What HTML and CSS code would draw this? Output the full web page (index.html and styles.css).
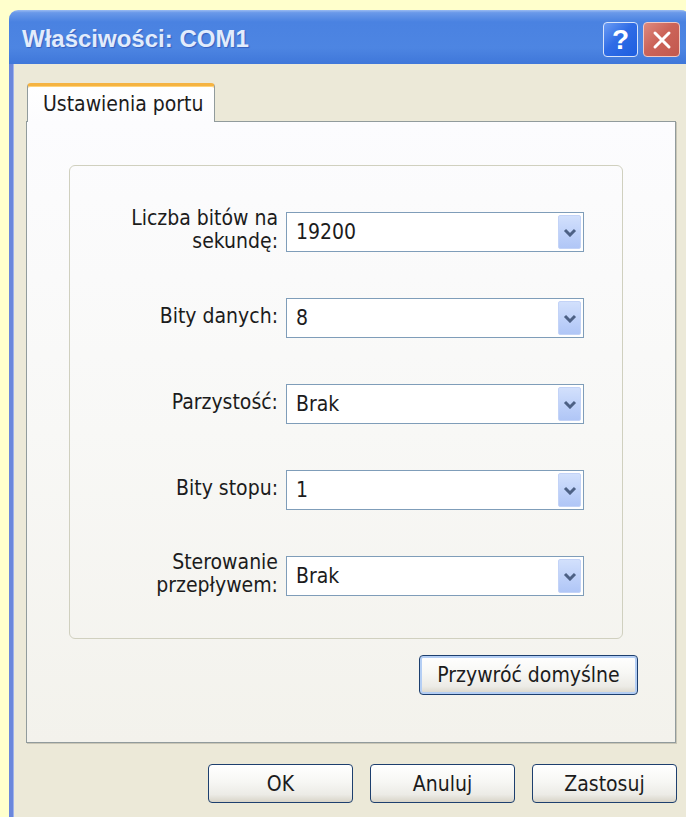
FILE: index.html
```html
<!DOCTYPE html>
<html lang="pl">
<head>
<meta charset="utf-8">
<title>Właściwości: COM1</title>
<link rel="stylesheet" href="styles.css">
</head>
<body>
<div class="window">
  <div class="titlebar">
    <span class="title">Właściwości: COM1</span>
    <div class="caption-buttons">
      <span class="cap cap-help">?</span>
      <span class="cap cap-close">
        <svg width="20" height="20" viewBox="0 0 20 20"><path d="M3 3 L17 17 M17 3 L3 17" stroke="#fff" stroke-width="3" stroke-linecap="round"/></svg>
      </span>
    </div>
  </div>
  <div class="client">
    <div class="tabs">
      <div class="tab tab-active">Ustawienia portu</div>
    </div>
    <div class="panel">
      <div class="group">
        <div class="row">
          <div class="lbl">Liczba bitów na<br>sekundę:</div>
          <div class="combo"><span class="val">19200</span><span class="drop"><svg width="14" height="9" viewBox="0 0 14 9"><path d="M2 2 L7 7 L12 2" fill="none" stroke="#4d6185" stroke-width="3"/></svg></span></div>
        </div>
        <div class="row">
          <div class="lbl">Bity danych:</div>
          <div class="combo"><span class="val">8</span><span class="drop"><svg width="14" height="9" viewBox="0 0 14 9"><path d="M2 2 L7 7 L12 2" fill="none" stroke="#4d6185" stroke-width="3"/></svg></span></div>
        </div>
        <div class="row">
          <div class="lbl">Parzystość:</div>
          <div class="combo"><span class="val">Brak</span><span class="drop"><svg width="14" height="9" viewBox="0 0 14 9"><path d="M2 2 L7 7 L12 2" fill="none" stroke="#4d6185" stroke-width="3"/></svg></span></div>
        </div>
        <div class="row">
          <div class="lbl">Bity stopu:</div>
          <div class="combo"><span class="val">1</span><span class="drop"><svg width="14" height="9" viewBox="0 0 14 9"><path d="M2 2 L7 7 L12 2" fill="none" stroke="#4d6185" stroke-width="3"/></svg></span></div>
        </div>
        <div class="row">
          <div class="lbl">Sterowanie<br>przepływem:</div>
          <div class="combo"><span class="val">Brak</span><span class="drop"><svg width="14" height="9" viewBox="0 0 14 9"><path d="M2 2 L7 7 L12 2" fill="none" stroke="#4d6185" stroke-width="3"/></svg></span></div>
        </div>
      </div>
      <div class="panel-actions">
        <button class="btn btn-focus btn-wide">Przywróć domyślne</button>
      </div>
    </div>
    <div class="dialog-actions">
      <button class="btn">OK</button>
      <button class="btn">Anuluj</button>
      <button class="btn">Zastosuj</button>
    </div>
  </div>
</div>
</body>
</html>
```
FILE: styles.css
```css
html, body {
  margin: 0;
  height: 817px;
  overflow: hidden;
}

body {
  background: #ffffcc;
  padding: 10px 0 0 9px;
  box-sizing: border-box;
  font-family: "DejaVu Sans Condensed", "DejaVu Sans", sans-serif;
  font-size: 21px;
  color: #1c1c1c;
}

.window {
  width: 681px;
}

/* caption bar */
.titlebar {
  height: 54px;
  box-sizing: border-box;
  border-radius: 9px 9px 0 0;
  background: linear-gradient(180deg, #9bbcf2 0, #6a99e9 5%, #4a82e1 22%, #4d85e2 70%, #3f77da 100%);
  display: flex;
  align-items: center;
  justify-content: space-between;
  padding: 0 10px 0 13px;
}

.title {
  font-family: "Liberation Sans", Arial, sans-serif;
  font-weight: bold;
  font-size: 24px;
  color: #e2ecfc;
  text-shadow: 1px 1px 1px rgba(20, 40, 140, 0.4);
  margin-top: 4px;
}

.caption-buttons {
  display: flex;
  gap: 5px;
  margin-top: 5px;
}

.cap {
  width: 35px;
  height: 35px;
  box-sizing: border-box;
  border: 1px solid #d8e4fb;
  border-radius: 4px;
  display: flex;
  align-items: center;
  justify-content: center;
}

.cap-help {
  background: linear-gradient(135deg, #6b9cf4 0, #2f6ce6 45%, #1e5ee0 100%);
  color: #fff;
  font-family: "Liberation Sans", Arial, sans-serif;
  font-weight: bold;
  font-size: 28px;
  line-height: 1;
}

.cap-close {
  width: 37px;
  background: linear-gradient(135deg, #dd8a7f 0, #cc6459 45%, #c2584e 100%);
  border-color: #f1c9c3;
}

/* window body */
.client {
  background: #ece9d8;
  border-left: 4px solid #6b87dc;
  border-right: 4px solid #6b87dc;
  padding: 19px 0 0 13px;
  box-shadow: inset 1px 0 0 #9fb2ea;
}

.tabs {
  display: flex;
  padding-left: 1px;
}

.tab {
  height: 39px;
  box-sizing: border-box;
  padding: 6px 0 0 15px;
  font-size: 21px;
}

.tab-active {
  width: 188px;
  background: linear-gradient(180deg, #ffffff, #fcfcfe);
  border: 1px solid #919b9c;
  border-bottom: none;
  border-top: 3px solid #f5b341;
  border-radius: 4px 4px 0 0;
  margin-bottom: -1px;
  position: relative;
  z-index: 1;
  box-shadow: inset 0 1px 0 #ffd37a;
}

.panel {
  width: 650px;
  height: 622px;
  box-sizing: border-box;
  border: 1px solid #919b9c;
  background: linear-gradient(180deg, #fcfcfe 0, #f8f8f6 50%, #f3f2ec 100%);
  box-shadow: 1px 1px 0 #c9c6b6;
  display: flex;
  flex-direction: column;
}

.group {
  width: 554px;
  height: 474px;
  box-sizing: border-box;
  margin: 43px 0 0 42px;
  border: 1px solid #d0d0bf;
  border-radius: 6px;
  padding-top: 46px;
  display: flex;
  flex-direction: column;
  gap: 46px;
}

.row {
  display: flex;
  align-items: center;
  height: 40px;
}

.lbl {
  width: 208px;
  text-align: right;
  line-height: 23px;
  margin-top: -4px;
}

.combo {
  width: 298px;
  height: 40px;
  box-sizing: border-box;
  margin-left: 8px;
  border: 1px solid #7f9db9;
  background: #fff;
  display: flex;
  align-items: center;
  padding-left: 9px;
}

.val {
  flex: 1;
}

.drop {
  flex-shrink: 0;
  width: 23px;
  height: 34px;
  margin-right: 2px;
  box-sizing: border-box;
  border: 1px solid #c3d3f7;
  border-radius: 2px;
  background: linear-gradient(180deg, #d2e0fc 0, #bdd0f9 60%, #b0c6f6 100%);
  display: flex;
  align-items: center;
  justify-content: center;
}

.panel-actions {
  display: flex;
  justify-content: flex-end;
  padding: 16px 37px 0 0;
}

.dialog-actions {
  display: flex;
  justify-content: flex-end;
  gap: 17px;
  padding: 21px 9px 30px 0;
}

.btn {
  width: 145px;
  height: 39px;
  box-sizing: border-box;
  border: 1px solid #1d3f6e;
  border-radius: 4px;
  background: linear-gradient(180deg, #ffffff 0, #f7f7f4 45%, #ecebe6 80%, #d8d4c8 100%);
  font-family: "DejaVu Sans Condensed", "DejaVu Sans", sans-serif;
  font-size: 21px;
  color: #1c1c1c;
  padding: 0;
}

.btn-wide {
  width: 219px;
  height: 40px;
}

.btn-focus {
  box-shadow: inset 0 0 0 2px #b4cef4;
}
```
